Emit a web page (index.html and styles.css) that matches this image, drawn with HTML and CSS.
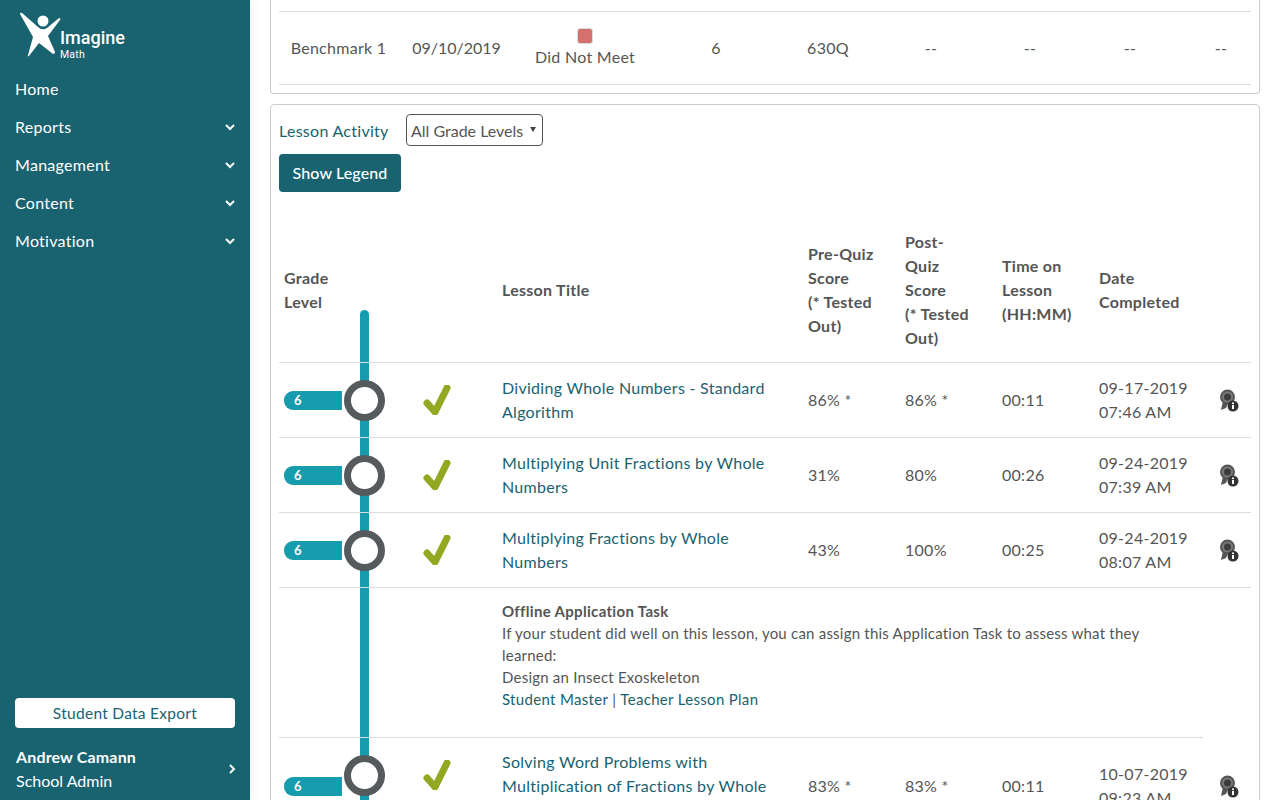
FILE: index.html

```html
<!DOCTYPE html>
<html lang="en">
<head>
    <meta charset="UTF-8">
    <meta name="viewport" content="width=device-width, initial-scale=1.0">
    <title>Imagine Math - Student Progress</title>
    <link rel="stylesheet" href="styles.css">
</head>
<body>

    <aside class="sidebar">
        <div class="logo">
            <svg class="logo-mark" width="44" height="50" viewBox="18 10 44 50">
                <circle cx="43" cy="21" r="5.5" fill="#fff"/>
                <path d="M20 14 Q20 12 22 13 L38 27 Q42 31 47 28 L59 18 Q61 18 60 20 L48 36 L55 52 Q55 54 53 54 L39 43 L29 56 Q27 57 28 55 L33 37 Z" fill="#fff"/>
            </svg>
            <div class="logo-text">
                <span class="logo-name">Imagine</span>
                <span class="logo-sub">Math</span>
            </div>
        </div>

        <nav class="nav">
            <a class="nav-item">Home</a>
            <a class="nav-item">Reports
                <svg class="chevron" width="10" height="7" viewBox="0 0 10 7"><polyline points="1,1 5,5 9,1"/></svg>
            </a>
            <a class="nav-item">Management
                <svg class="chevron" width="10" height="7" viewBox="0 0 10 7"><polyline points="1,1 5,5 9,1"/></svg>
            </a>
            <a class="nav-item">Content
                <svg class="chevron" width="10" height="7" viewBox="0 0 10 7"><polyline points="1,1 5,5 9,1"/></svg>
            </a>
            <a class="nav-item">Motivation
                <svg class="chevron" width="10" height="7" viewBox="0 0 10 7"><polyline points="1,1 5,5 9,1"/></svg>
            </a>
        </nav>

        <div class="sidebar-bottom">
            <a class="export-btn">Student Data Export</a>
            <div class="user">
                <div>
                    <div class="user-name">Andrew Camann</div>
                    <div class="user-role">School Admin</div>
                </div>
                <svg class="chevron" width="7" height="10" viewBox="0 0 7 10"><polyline points="1,1 5,5 1,9"/></svg>
            </div>
        </div>
    </aside>

    <main class="content">

        <section class="card card-top">
            <div class="benchmark-row">
                <div>Benchmark 1</div>
                <div class="bench-date">09/10/2019</div>
                <div class="status">
                    <span class="status-box"></span>
                    <span>Did Not Meet</span>
                </div>
                <div>6</div>
                <div>630Q</div>
                <div>--</div>
                <div>--</div>
                <div>--</div>
                <div class="last-dash">--</div>
            </div>
        </section>

        <section class="card card-lessons">
            <div class="filter-row">
                <span class="filter-label">Lesson Activity</span>
                <div class="select">All Grade Levels <span class="select-arrow"></span></div>
            </div>
            <button class="legend-btn">Show Legend</button>

            <div class="table-wrap">
                <div class="timeline"></div>
                <table class="lessons">
                    <colgroup>
                        <col class="c-grade"><col class="c-check"><col class="c-title">
                        <col class="c-num"><col class="c-num"><col class="c-num">
                        <col class="c-date"><col class="c-icon">
                    </colgroup>
                    <thead>
                        <tr>
                            <th>Grade<br>Level</th>
                            <th></th>
                            <th>Lesson Title</th>
                            <th>Pre-Quiz<br>Score<br>(* Tested<br>Out)</th>
                            <th>Post-<br>Quiz<br>Score<br>(* Tested<br>Out)</th>
                            <th>Time on<br>Lesson<br>(HH:MM)</th>
                            <th>Date<br>Completed</th>
                            <th></th>
                        </tr>
                    </thead>
                    <tbody>
                        <tr>
                            <td class="grade"><span class="tag">6</span><span class="ring"></span></td>
                            <td class="check"><svg width="28" height="30" viewBox="0 0 28 30"><path d="M4 18 L12 27 L24 3" fill="none" stroke="#93a822" stroke-width="7" stroke-linecap="round" stroke-linejoin="round"/></svg></td>
                            <td><a class="link">Dividing Whole Numbers - Standard Algorithm</a></td>
                            <td>86% *</td>
                            <td>86% *</td>
                            <td>00:11</td>
                            <td>09-17-2019 07:46 AM</td>
                            <td class="medal"><svg width="22" height="24" viewBox="0 0 22 24"><path d="M4 13 L2 22 L7 20 L9 15 Z M9 15 L10 23 L14 16 Z" fill="#555"/><circle cx="8.5" cy="9" r="6.5" fill="#777" stroke="#555" stroke-width="2"/><circle cx="8.5" cy="9" r="3.5" fill="#3c3c3c"/><circle cx="14" cy="18" r="5.5" fill="#333"/><rect x="13" y="17" width="2" height="4" fill="#fff"/><rect x="13" y="14.5" width="2" height="1.6" fill="#fff"/></svg></td>
                        </tr>
                        <tr>
                            <td class="grade"><span class="tag">6</span><span class="ring"></span></td>
                            <td class="check"><svg width="28" height="30" viewBox="0 0 28 30"><path d="M4 18 L12 27 L24 3" fill="none" stroke="#93a822" stroke-width="7" stroke-linecap="round" stroke-linejoin="round"/></svg></td>
                            <td><a class="link">Multiplying Unit Fractions by Whole Numbers</a></td>
                            <td>31%</td>
                            <td>80%</td>
                            <td>00:26</td>
                            <td>09-24-2019 07:39 AM</td>
                            <td class="medal"><svg width="22" height="24" viewBox="0 0 22 24"><path d="M4 13 L2 22 L7 20 L9 15 Z M9 15 L10 23 L14 16 Z" fill="#555"/><circle cx="8.5" cy="9" r="6.5" fill="#777" stroke="#555" stroke-width="2"/><circle cx="8.5" cy="9" r="3.5" fill="#3c3c3c"/><circle cx="14" cy="18" r="5.5" fill="#333"/><rect x="13" y="17" width="2" height="4" fill="#fff"/><rect x="13" y="14.5" width="2" height="1.6" fill="#fff"/></svg></td>
                        </tr>
                        <tr>
                            <td class="grade"><span class="tag">6</span><span class="ring"></span></td>
                            <td class="check"><svg width="28" height="30" viewBox="0 0 28 30"><path d="M4 18 L12 27 L24 3" fill="none" stroke="#93a822" stroke-width="7" stroke-linecap="round" stroke-linejoin="round"/></svg></td>
                            <td><a class="link">Multiplying Fractions by Whole Numbers</a></td>
                            <td>43%</td>
                            <td>100%</td>
                            <td>00:25</td>
                            <td>09-24-2019 08:07 AM</td>
                            <td class="medal"><svg width="22" height="24" viewBox="0 0 22 24"><path d="M4 13 L2 22 L7 20 L9 15 Z M9 15 L10 23 L14 16 Z" fill="#555"/><circle cx="8.5" cy="9" r="6.5" fill="#777" stroke="#555" stroke-width="2"/><circle cx="8.5" cy="9" r="3.5" fill="#3c3c3c"/><circle cx="14" cy="18" r="5.5" fill="#333"/><rect x="13" y="17" width="2" height="4" fill="#fff"/><rect x="13" y="14.5" width="2" height="1.6" fill="#fff"/></svg></td>
                        </tr>
                        <tr>
                            <td></td>
                            <td></td>
                            <td class="offline" colspan="5">
                                <strong>Offline Application Task</strong><br>
                                If your student did well on this lesson, you can assign this Application Task to assess what they learned:<br>
                                Design an Insect Exoskeleton<br>
                                <a class="link">Student Master</a> | <a class="link">Teacher Lesson Plan</a>
                            </td>
                            <td></td>
                        </tr>
                        <tr class="row-long">
                            <td class="grade"><span class="tag">6</span><span class="ring"></span></td>
                            <td class="check"><svg width="28" height="30" viewBox="0 0 28 30"><path d="M4 18 L12 27 L24 3" fill="none" stroke="#93a822" stroke-width="7" stroke-linecap="round" stroke-linejoin="round"/></svg></td>
                            <td><a class="link">Solving Word Problems with Multiplication of Fractions by Whole Numbers</a></td>
                            <td>83% *</td>
                            <td>83% *</td>
                            <td>00:11</td>
                            <td>10-07-2019 09:23 AM</td>
                            <td class="medal no-line"><svg width="22" height="24" viewBox="0 0 22 24"><path d="M4 13 L2 22 L7 20 L9 15 Z M9 15 L10 23 L14 16 Z" fill="#555"/><circle cx="8.5" cy="9" r="6.5" fill="#777" stroke="#555" stroke-width="2"/><circle cx="8.5" cy="9" r="3.5" fill="#3c3c3c"/><circle cx="14" cy="18" r="5.5" fill="#333"/><rect x="13" y="17" width="2" height="4" fill="#fff"/><rect x="13" y="14.5" width="2" height="1.6" fill="#fff"/></svg></td>
                        </tr>
                    </tbody>
                </table>
            </div>
        </section>

    </main>

</body>
</html>
```

FILE: styles.css

```css
/* page frame */
html, body {
    margin: 0;
    padding: 0;
    height: 100%;
    overflow: hidden;
}

body {
    display: flex;
    font-family: "Lato", "Liberation Sans", sans-serif;
    font-size: 16px;
    line-height: 24px;
    letter-spacing: 0.28px;
    color: #555;
    background-color: #fff;
}

/* sidebar */
.sidebar {
    width: 250px;
    height: 100vh;
    flex-shrink: 0;
    display: flex;
    flex-direction: column;
    background-color: #19626f;
    color: #fff;
    box-shadow: 0 0 12px rgba(0, 0, 0, 0.08);
}

.logo {
    height: 70px;
    display: flex;
    padding: 10px 0 0 18px;
    box-sizing: border-box;
}

.logo-text {
    display: flex;
    flex-direction: column;
    margin-top: 17px;
    margin-left: -2px;
}

.logo-name {
    font-family: "Roboto", sans-serif;
    font-size: 18px;
    line-height: 22px;
    font-weight: 500;
    letter-spacing: 0;
}

.logo-sub {
    font-family: "Roboto", sans-serif;
    font-size: 10.5px;
    line-height: 12px;
    letter-spacing: 0.2px;
}

.nav-item {
    height: 38px;
    padding: 0 15px;
    display: flex;
    align-items: center;
    justify-content: space-between;
    color: #fff;
}

.chevron polyline {
    fill: none;
    stroke: #fff;
    stroke-width: 2;
}

.sidebar-bottom {
    margin-top: auto;
    padding: 0 15px 7px 15px;
}

.export-btn {
    display: block;
    height: 30px;
    line-height: 31px;
    text-align: center;
    background-color: #fff;
    color: #19626f;
    border-radius: 4px;
    font-size: 15.5px;
}

.user {
    margin-top: 17px;
    display: flex;
    align-items: center;
    justify-content: space-between;
    padding: 0 0 0 1px;
    letter-spacing: 0;
}

.user .chevron {
    margin-right: -1px;
}

.user-name {
    font-weight: 700;
    letter-spacing: 0.15px;
}

/* main column */
.content {
    flex-grow: 1;
    padding: 0 20px;
    overflow: hidden;
    font-size: 16px;
}

.card {
    border: 1px solid #ccc;
    border-radius: 4px;
    background-color: #fff;
}

.card-top {
    border-top: none;
    border-top-left-radius: 0;
    border-top-right-radius: 0;
    padding: 11px 8px 8px 8px;
}

.benchmark-row {
    display: grid;
    grid-template-columns: 119px 117px 140px 122px 102px 104px 94px 106px 68px;
    align-items: center;
    height: 72px;
    border-top: 1px solid #ddd;
    border-bottom: 1px solid #ddd;
    text-align: center;
}

.bench-date {
    letter-spacing: 0;
}

.status {
    display: flex;
    flex-direction: column;
    align-items: center;
}

.status-box {
    width: 14px;
    height: 14px;
    background-color: #d4716f;
    border: 1px solid #ddd;
    border-radius: 3px;
    margin-bottom: 1px;
}

.last-dash {
    padding-left: 8px;
}

.card-lessons {
    margin-top: 10px;
    padding: 9px 8px 0 8px;
}

.filter-row {
    display: flex;
    align-items: center;
}

.filter-label {
    color: #19626f;
    width: 127px;
    padding-top: 1px;
}

.select {
    width: 137px;
    height: 32px;
    line-height: 32px;
    box-sizing: border-box;
    border: 1px solid #555;
    border-radius: 4px;
    padding-left: 4px;
    position: relative;
    white-space: nowrap;
    letter-spacing: 0;
}

.select-arrow {
    position: absolute;
    right: 6px;
    top: 12px;
    width: 0;
    height: 0;
    border-left: 3px solid transparent;
    border-right: 3px solid transparent;
    border-top: 5px solid #444;
}

.legend-btn {
    display: block;
    margin-top: 8px;
    width: 122px;
    height: 38px;
    padding: 0 0 2px 0;
    border: none;
    border-radius: 4px;
    background-color: #19626f;
    color: #fff;
    font-family: inherit;
    font-size: 16px;
    font-weight: 500;
    letter-spacing: 0.1px;
}

/* lesson table and the grade line behind it */
.table-wrap {
    position: relative;
    margin-top: 26px;
}

.timeline {
    position: absolute;
    left: 81px;
    top: 92px;
    bottom: 0;
    width: 9px;
    background-color: #179cad;
    border-radius: 5px 5px 0 0;
}

.lessons {
    position: relative;
    width: 972px;
    table-layout: fixed;
    border-collapse: collapse;
}

.c-grade { width: 139px; }
.c-check { width: 79px; }
.c-title { width: 306px; }
.c-num { width: 97px; }
.c-date { width: 109px; }
.c-icon { width: 48px; }

.lessons th {
    padding: 12px 5px;
    text-align: left;
    font-weight: 700;
    vertical-align: middle;
}

.lessons td {
    padding: 13px 5px;
    border-top: 1px solid #ddd;
    vertical-align: middle;
}

.lessons .row-long td {
    padding-top: 12px;
}

.lessons td.no-line {
    border-top: none;
}

.link {
    color: #19626f;
}

.grade {
    position: relative;
}

.tag {
    display: block;
    width: 58px;
    height: 19px;
    line-height: 19px;
    padding-left: 10px;
    box-sizing: border-box;
    background-color: #179cad;
    border-radius: 9px 0 0 9px;
    color: #fff;
    font-size: 13px;
    font-weight: 700;
}

.ring {
    position: absolute;
    left: 65px;
    top: 17px;
    width: 41px;
    height: 41px;
    box-sizing: border-box;
    border: 7px solid #555a5c;
    border-radius: 50%;
    background-color: #fff;
}

.lessons td.check,
.lessons .row-long td.check {
    vertical-align: top;
    padding-top: 22px;
    padding-bottom: 0;
}

.check svg,
.medal svg {
    display: block;
}

.lessons td.offline {
    padding: 12px 20px 27px 5px;
    font-size: 15px;
    line-height: 22px;
    letter-spacing: 0.22px;
}

.offline strong,
.offline .link {
    letter-spacing: 0.32px;
}

.offline strong {
    font-weight: 700;
}

.lessons td.medal {
    padding-left: 16px;
}
```
